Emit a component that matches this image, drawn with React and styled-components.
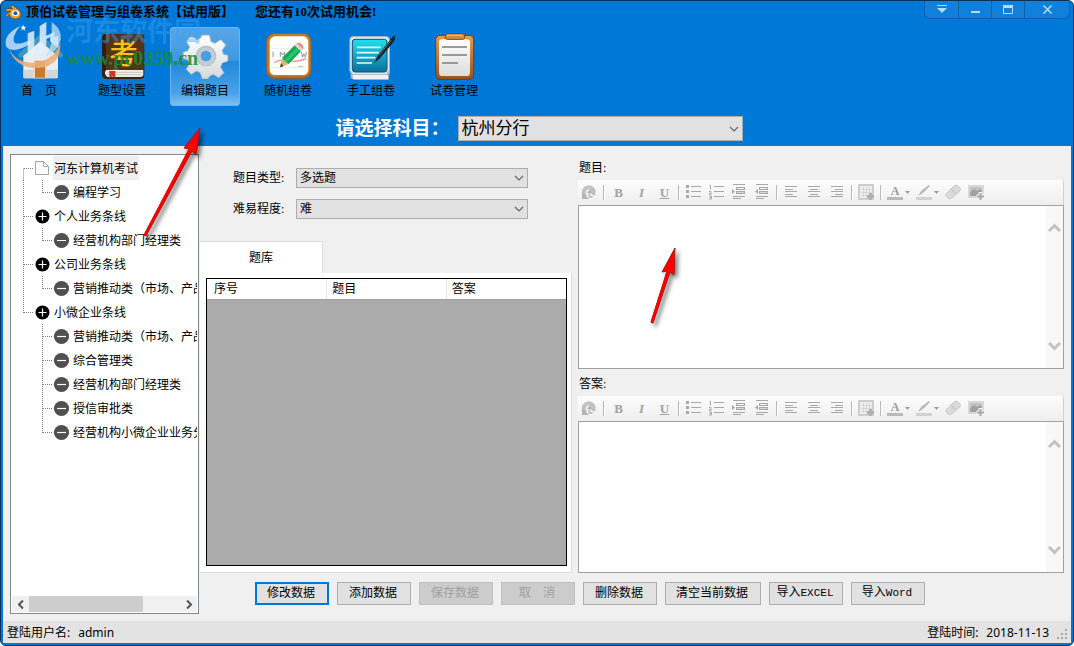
import React from "react";
import styled, { createGlobalStyle, css } from "styled-components";

const GlobalStyle = createGlobalStyle`
  * { box-sizing: border-box; }
  html, body { margin: 0; padding: 0; background: #fff; }
  body {
    font-family: "Liberation Serif", "Noto Sans CJK SC", sans-serif;
    font-size: 12px;
    color: #000;
  }
  button, select, textarea { font: inherit; color: inherit; margin: 0; }
  button { padding: 0; }
  svg { display: block; flex: none; }
`;

/* ---------- window frame ---------- */

const Window = styled.div`
  position: relative;
  display: flex;
  flex-direction: column;
  min-height: 100vh;
  padding: 0 2px 2px;
  border: 1px solid #06325c;
  border-radius: 6px;
  background: #0078d7;
  overflow: hidden;
`;

const TitleBar = styled.header`
  display: flex;
  align-items: flex-start;
  height: 26px;
`;

const AppTitle = styled.h1`
  display: flex;
  align-items: center;
  gap: 4px;
  flex: 1;
  margin: 0;
  padding-left: 2px;
  font-size: 13px;
  font-weight: 700;
  line-height: 22px;
  white-space: nowrap;
`;

const TrialNote = styled.span`
  padding-left: 17px;
`;

const WindowControls = styled.div`
  display: flex;
  margin-right: 1px;
  border: 1px solid #0861ae;
  border-top: 0;
  border-radius: 0 0 6px 6px;
  background: #1180da;
  overflow: hidden;
`;

const ControlButton = styled.button`
  display: flex;
  align-items: center;
  justify-content: center;
  width: ${(p) => (p.$wide ? 45 : 33)}px;
  height: 17px;
  border: 0;
  border-left: ${(p) => (p.$first ? "0" : "1px solid #0861ae")};
  background: transparent;
`;

const Toolbar = styled.nav`
  display: flex;
  gap: 13px;
  padding-left: 1px;
`;

const ToolbarButton = styled.button`
  display: flex;
  flex-direction: column;
  align-items: center;
  width: 70px;
  height: 79px;
  padding: 5px 0 0;
  border: 1px solid transparent;
  border-radius: 3px;
  background: transparent;
  line-height: 20px;
  white-space: pre;
  ${(p) =>
    p.$active &&
    css`
      border-color: #6db4ec;
      background: linear-gradient(#5aa6e4 0%, #3d98e2 42%, #2088da 43%, #4aa3e8 85%, #7cc0f2 100%);
    `}
`;

const SubjectRow = styled.div`
  display: flex;
  justify-content: center;
  align-items: center;
  gap: 8px;
  padding: 10px 0 5px 4px;
`;

const SubjectLabel = styled.label`
  color: #fff;
  font-size: 19px;
  font-weight: 700;
  line-height: 25px;
`;

/* ---------- drop-down ---------- */

const SelectFrame = styled.span`
  display: grid;
  align-items: center;
  width: ${(p) => p.$width}px;
`;

const NativeSelect = styled.select`
  grid-area: 1 / 1;
  width: 100%;
  height: ${(p) => (p.$large ? 25 : 20)}px;
  padding: 0 24px 0 3px;
  border: 1px solid #adadad;
  border-radius: 0;
  background: #e1e1e1;
  appearance: none;
  font-size: ${(p) => (p.$large ? 17 : 12)}px;
`;

const SelectArrow = styled.svg`
  grid-area: 1 / 1;
  justify-self: end;
  margin-right: 4px;
  pointer-events: none;
`;

function Select({ id, width, large, options }) {
  return (
    <SelectFrame $width={width}>
      <NativeSelect id={id} $large={large} defaultValue={options[0]}>
        {options.map((o) => (
          <option key={o}>{o}</option>
        ))}
      </NativeSelect>
      <SelectArrow width="10" height="6" viewBox="0 0 10 6">
        <path d="M1 1l4 4 4-4" fill="none" stroke="#666" strokeWidth="1.2" />
      </SelectArrow>
    </SelectFrame>
  );
}

/* ---------- body ---------- */

const Body = styled.main`
  display: flex;
  gap: 1px;
  flex: 1;
  padding: 8px 7px 7px;
  background: #f0f0f0;
`;

const TreePanel = styled.aside`
  display: flex;
  flex-direction: column;
  flex: none;
  width: 189px;
  padding: 1px;
  border: 1px solid #828790;
  background: #fff;
`;

const TreeList = styled.ul`
  flex: 1;
  margin: 0;
  padding: 0 0 0 2px;
  list-style: none;
  overflow: hidden;
`;

const TreeRow = styled.li`
  display: flex;
  align-items: center;
  height: 24px;
  white-space: nowrap;
`;

const TreeText = styled.span`
  margin-left: 1px;
  padding: 2px 1px 0;
  line-height: 22px;
  background: ${(p) => (p.$selected ? "#efefef" : "transparent")};
`;

const ScrollTrack = styled.div`
  display: flex;
  align-items: center;
  justify-content: space-between;
  height: 16px;
  background: #f0f0f0;
`;

const ScrollThumb = styled.div`
  flex: none;
  width: 114px;
  height: 16px;
  background: #cdcdcd;
`;

const ScrollArrow = styled.button`
  display: flex;
  align-items: center;
  justify-content: center;
  width: 17px;
  height: 16px;
  border: 0;
  background: transparent;
`;

const ScrollSpace = styled.div`
  flex: 1;
`;

const Main = styled.div`
  display: flex;
  flex-direction: column;
  gap: 9px;
  flex: 1;
  min-width: 0;
  padding-bottom: 9px;
`;

const Columns = styled.div`
  display: flex;
  gap: 6px;
  flex: 1;
`;

const QuestionColumn = styled.section`
  display: flex;
  flex-direction: column;
  flex: none;
  width: 372px;
`;

const Filters = styled.div`
  display: flex;
  flex-direction: column;
  gap: 11px;
  padding: 14px 0 22px 33px;
`;

const FilterRow = styled.div`
  display: flex;
  align-items: center;
`;

const FilterLabel = styled.label`
  width: 63px;
  line-height: 20px;
`;

const Tab = styled.button`
  width: 123px;
  height: 32px;
  padding-bottom: 2px;
  border: 1px solid #dcdcdc;
  border-width: 1px 1px 0 0;
  background: #fff;
`;

const TabPanel = styled.div`
  display: flex;
  flex: 1;
  padding: 5px 4px 6px 6px;
  border: 1px solid #dcdcdc;
  border-width: 0 1px 1px 0;
  background: #fff;
`;

const GridFrame = styled.div`
  flex: 1;
  border: 1px solid #000;
  background: #ababab;
`;

const QuestionTable = styled.table`
  width: 100%;
  border-collapse: collapse;
  table-layout: fixed;
  background: #fff;
`;

const HeadCell = styled.th`
  height: 20px;
  padding: 1px 0 0 5px;
  border-right: 1px solid #e5e5e5;
  border-bottom: 1px solid #a0a0a0;
  font-weight: 400;
  line-height: 18px;
  text-align: left;
  &:first-child { padding-left: 7px; }
  &:last-child { border-right: 0; }
`;

const EditorColumn = styled.section`
  display: flex;
  flex-direction: column;
  gap: 1px;
  flex: 1;
  min-width: 0;
`;

const EditorField = styled.div`
  display: flex;
  flex-direction: column;
  flex: 1 1 ${(p) => p.$basis}px;
`;

const EditorLabel = styled.label`
  padding: 2px 0 0 1px;
  line-height: 24px;
`;

const FormatBar = styled.div`
  display: flex;
  align-items: center;
  height: 25px;
  border-right: 1px solid #d0d0d0;
  border-radius: 2px 2px 0 0;
  background: linear-gradient(#fdfdfd, #eeeeee);
`;

const FormatButton = styled.button`
  display: flex;
  align-items: center;
  justify-content: center;
  width: ${(p) => (p.$menu ? 29 : 23)}px;
  height: 25px;
  border: 0;
  background: transparent;
  color: #a2a2a2;
  font-family: "Liberation Serif", serif;
  font-size: 13px;
  font-weight: 700;
  font-style: ${(p) => (p.$italic ? "italic" : "normal")};
  text-decoration: ${(p) => (p.$underline ? "underline" : "none")};
`;

const Divider = styled.span`
  width: 2px;
  height: 15px;
  margin: 0 2px;
  border-left: 1px solid #b8b8b8;
  border-right: 1px solid #fff;
`;

const EditorBox = styled.div`
  display: flex;
  flex: 1;
  border: 1px solid #a0a0a0;
  background: #fff;
`;

const EditorText = styled.textarea`
  flex: 1;
  min-width: 0;
  padding: 4px;
  border: 0;
  outline: 0;
  background: #fff;
  resize: none;
`;

const EditorScroll = styled.div`
  display: flex;
  flex-direction: column;
  align-items: center;
  justify-content: space-between;
  width: 17px;
  padding: 17px 0;
  background: #f8f8f8;
`;

const Actions = styled.div`
  display: flex;
  gap: 8px;
  padding-left: 55px;
`;

const ActionButton = styled.button`
  width: ${(p) => (p.$wide ? 96 : 74)}px;
  height: 23px;
  padding: 0 2px 2px 0;
  border: ${(p) => (p.$focused ? "2px solid #0078d7" : "1px solid #adadad")};
  background: #e1e1e1;
  line-height: 18px;
  white-space: pre;
  &:disabled {
    border-color: #bfbfbf;
    background: #cccccc;
    color: #a0a0a0;
  }
`;

const Latin = styled.span`
  font-family: "Liberation Mono", monospace;
  font-size: 11px;
`;

const StatusBar = styled.footer`
  display: flex;
  justify-content: space-between;
  height: 22px;
  padding: 1px 2px 0 4px;
  background: #e3e3e3;
  font-family: "Noto Sans", "Noto Sans CJK SC", sans-serif;
  line-height: 22px;
`;

const StatusItem = styled.span`
  display: flex;
  gap: 8px;
`;

const Grip = styled.svg`
  align-self: flex-end;
`;

/* ---------- overlays ---------- */

const Watermark = styled.div`
  position: absolute;
  top: 17px;
  left: 4px;
  display: flex;
  gap: 1px;
  pointer-events: none;
`;

const WatermarkText = styled.div`
  display: flex;
  flex-direction: column;
  color: rgba(60, 160, 240, 0.45);
  font-size: 27px;
  font-weight: 700;
  line-height: 28px;
  white-space: nowrap;
`;

const WatermarkSite = styled.span`
  color: rgba(28, 140, 50, 0.85);
  font-size: 20px;
  line-height: 24px;
`;

const Pointer = styled.svg`
  position: absolute;
  left: ${(p) => p.$x}px;
  top: ${(p) => p.$y}px;
  overflow: visible;
  filter: drop-shadow(3px 3px 2px rgba(0, 0, 0, 0.5));
  pointer-events: none;
`;

/* ---------- icons ---------- */

const AppLogo = () => (
  <svg width="17" height="16" viewBox="0 0 51 48">
    <path d="M3 14h20l-6-6 5-5 22 17c9 10 2 24-12 25-12 0-19-7-19-14L5 39l-4-5 16-12H3z" fill="#f39a1c" stroke="#5d4424" strokeWidth="2" />
    <ellipse cx="31" cy="28" rx="11" ry="9" fill="#fff" />
    <circle cx="31" cy="28" r="6" fill="#1c62a8" />
  </svg>
);

const HomeIcon = () => (
  <svg width="48" height="48" viewBox="0 0 144 144">
    <path d="M25 62h104v70q0 4-4 4H29q-4 0-4-4z" fill="#e9eef2" />
    <path d="M25 110h104v22q0 4-4 4H29q-4 0-4-4z" fill="#d3d6da" />
    <path d="M56 82h38v54H56z" fill="#f0d9c0" />
    <path d="M60 84h30v50H60z" fill="#c77a33" />
    <path d="M60 84h30v18H60z" fill="#dc9a5c" />
    <path d="M106 10h24v36l-24-20z" fill="#e8f1f7" />
    <path d="M76 2l68 62q1 10-9 11L76 24 18 75q-11-2-8-12z" fill="#3f97bd" />
    <path d="M76 24l53 46v6H25v-6z" fill="#e6edf2" />
  </svg>
);

const BookIcon = () => (
  <svg width="48" height="48" viewBox="0 0 144 144">
    <path d="M22 3h106q11 0 11 11v112q0 12-12 12H26q-14 0-14-16V14Q12 3 22 3z" fill="#3b2412" />
    <path d="M24 111h112v16q-2 5-9 5H28q-12-10-4-21z" fill="#f0ede6" />
    <path d="M28 118h106M28 125h104" stroke="#b9b4aa" strokeWidth="2" />
    <path d="M22 4h104q11 0 11 10v97H26q-8 0-12 8V14Q14 4 22 4z" fill="#553317" />
    <path d="M14 14q0-10 9-10v107q-6 1-9 7z" fill="#301a0b" />
    <path d="M34 114h18v22l-9-6-9 6z" fill="#d2302a" />
    <text x="77" y="93" textAnchor="middle" fontSize="86" fontWeight="500" fill="#f9c21b" fontFamily="Noto Sans CJK SC">考</text>
  </svg>
);

const GearIcon = () => (
  <svg width="48" height="48" viewBox="0 0 144 144">
    <defs>
      <linearGradient id="gear" x1="0" y1="0" x2="0" y2="1">
        <stop offset="0" stopColor="#ffffff" />
        <stop offset="1" stopColor="#d6dade" />
      </linearGradient>
    </defs>
    <path
      d="M63 4h24l5 21 13 6 19-12 16 17-12 18 5 13 14 3v18l-18 6-6 14 11 18-16 16-18-11-13 6-4 8H64l-6-19-12-6-18 11-16-16 11-18-6-13-15-6V60l15-5 6-13-11-19 16-16 19 12 12-6z"
      fill="url(#gear)"
      stroke="#c3c8cc"
      strokeWidth="3"
      strokeLinejoin="round"
      transform="translate(5 3) scale(.92)"
    />
    <circle cx="75" cy="69" r="31" fill="#b4bcc4" />
    <circle cx="75" cy="71" r="28" fill="#c4ccd3" />
    <circle cx="75" cy="69" r="16" fill="#489ee2" />
  </svg>
);

const RandomIcon = () => (
  <svg width="48" height="48" viewBox="0 0 144 144">
    <rect x="7" y="1" width="135" height="136" rx="24" fill="#a9601f" />
    <rect x="10" y="3" width="129" height="128" rx="22" fill="#cb7822" />
    <rect x="17" y="10" width="116" height="116" rx="16" fill="#fdfdfb" />
    <path d="M22 46h106M22 82h106M22 104h106" stroke="#e2e2e2" strokeWidth="2" />
    <path d="M27 56v16M49 72V57l7 9 6-9v15M112 57l4 15 4-10 4 10 4-15" fill="none" stroke="#999" strokeWidth="3" />
    <path d="M30 90q20-14 42-7t54-7" fill="none" stroke="#f29a9a" strokeWidth="4" />
    <path d="M48 103l6-27 18 18z" fill="#e9b072" />
    <path d="M48 103l3-12 8 9z" fill="#444" />
    <path d="M54 75l38-38 19 18-38 39z" fill="#17a653" />
    <path d="M60 82l38-38 8 7-38 38z" fill="#27c56b" />
    <path d="M92 37l7-7 19 19-7 6z" fill="#d8d8d8" />
    <path d="M98 31q7-5 14 2 9 8 5 16z" fill="#ee8686" />
    <path d="M102 100h16" stroke="#bbb" strokeWidth="3" />
  </svg>
);

const ManualIcon = () => (
  <svg width="48" height="48" viewBox="0 0 144 144">
    <defs>
      <linearGradient id="screen" x1="0" y1="0" x2="0" y2="1">
        <stop offset="0" stopColor="#1fe0ee" />
        <stop offset="1" stopColor="#0a6f9e" />
      </linearGradient>
    </defs>
    <path d="M20 9h96q13 0 13 14v98q0 4-3 4v12q0 4-4 4H22q-4 0-4-4h-7v-16q-4-3-4-8V22Q7 9 20 9z" fill="#9fb3c6" />
    <path d="M21 12h94q11 0 11 11v89l-8 12H18l-8-12V23q0-11 11-11z" fill="#dfe7ef" />
    <path d="M17 126h106v12H17z" fill="#eef1f4" />
    <rect x="16" y="19" width="104" height="98" rx="8" fill="url(#screen)" stroke="#17506e" strokeWidth="3" />
    <path d="M29 43h72M29 59h66M29 74h56M29 90h46" stroke="#e5fcff" strokeWidth="5" />
    <path d="M82 90l10-22 44-56q8-7 11-2-1 8-10 20l-38 46z" fill="#16242c" />
    <path d="M97 66l36-45" stroke="#5d7782" strokeWidth="3" />
  </svg>
);

const ClipboardIcon = () => (
  <svg width="48" height="48" viewBox="0 0 144 144">
    <defs>
      <linearGradient id="board" x1="0" y1="0" x2="0" y2="1">
        <stop offset="0" stopColor="#e6a04a" />
        <stop offset="1" stopColor="#9c5219" />
      </linearGradient>
      <linearGradient id="sheet" x1="0" y1="0" x2="0" y2="1">
        <stop offset="0" stopColor="#ffffff" />
        <stop offset="1" stopColor="#dcdcdc" />
      </linearGradient>
    </defs>
    <rect x="17" y="7" width="114" height="132" rx="13" fill="url(#board)" stroke="#703a10" strokeWidth="3" />
    <rect x="27" y="19" width="93" height="110" rx="10" fill="url(#sheet)" />
    <path d="M36 42h75M36 66h75M36 90h48" stroke="#9a9a9a" strokeWidth="6" />
    <rect x="46" y="2" width="58" height="17" rx="6" fill="#d08c48" stroke="#7c451a" strokeWidth="3" />
    <path d="M52 7h46" stroke="#f0c08a" strokeWidth="3" />
  </svg>
);

const WatermarkLogo = () => (
  <svg width="60" height="54" viewBox="0 0 180 162">
    <path d="M8 84q20 50 74 50 66-3 84-62 4 72-66 78-70 4-92-66z" fill="#eeaa72" opacity=".85" />
    <path d="M46 24Q-8 50 4 86q22 24 76-11l-4-9Q30 86 26 69q-2-20 20-45z" fill="#cfe6fa" opacity=".8" />
    <path d="M68 46l20-8v68q0 16-28 18 8-8 8-20z" fill="#e2f1fd" opacity=".85" />
    <path d="M104 24l20-12v66q-6 26-32 34 12-14 12-32z" fill="#e2f1fd" opacity=".85" />
    <path d="M140 12q32 22 27 54-8 34-48 51 21-29 21-52z" fill="#bfe0f8" opacity=".75" />
    <path d="M122 54l26-12v10l-26 12z" fill="#e2f1fd" opacity=".85" />
    <path d="M55 20l3 6 6 1-5 4 2 7-6-4-6 4 2-7-5-4 6-1z" fill="#e8f4ff" />
  </svg>
);

const Guide = ({ kind }) => {
  const d = {
    first: "M9.5 12.5V24M10 12.5H19",
    tee: "M9.5 0V24M10 12.5H19",
    elbow: "M9.5 0V13M10 12.5H19",
    line: "M9.5 0V24",
    none: "",
  }[kind];
  return (
    <svg width="19" height="24">
      <path d={d} stroke="#808080" strokeDasharray="1 1" fill="none" />
    </svg>
  );
};

const NodeIcon = ({ kind }) => (
  <svg width="19" height="24" viewBox="0 0 19 24">
    {kind === "page" && (
      <path d="M2.5 5.5h8l5 5v8h-13zM10.5 5.5v5h5" fill="#fafafa" stroke="#a5a5a5" />
    )}
    {kind === "plus" && (
      <>
        <circle cx="9.5" cy="12.5" r="7" fill="#000" />
        <path d="M5.5 12.5h8M9.5 8.5v8" stroke="#fff" strokeWidth="1.2" />
      </>
    )}
    {kind === "minus" && (
      <>
        <circle cx="9.5" cy="12.5" r="7.6" fill="#505050" />
        <path d="M5 12.5h9" stroke="#fff" strokeWidth="1.2" />
      </>
    )}
  </svg>
);

const FormatIcon = ({ children, width = 23 }) => (
  <svg width={width} height="25" fill="none" stroke="#a8a8a8">
    {children}
  </svg>
);

const Chevron = ({ d, w, h, color = "#c2c2c2", weight = 3 }) => (
  <svg width={w} height={h}>
    <path d={d} fill="none" stroke={color} strokeWidth={weight} />
  </svg>
);

/* ---------- data ---------- */

const TOOLS = [
  { label: "首　页", Icon: HomeIcon },
  { label: "题型设置", Icon: BookIcon },
  { label: "编辑题目", Icon: GearIcon, active: true },
  { label: "随机组卷", Icon: RandomIcon },
  { label: "手工组卷", Icon: ManualIcon },
  { label: "试卷管理", Icon: ClipboardIcon },
];

const TREE = [
  { text: "河东计算机考试", guides: ["first"], icon: "page", selected: true },
  { text: "编程学习", guides: ["line", "elbow"], icon: "minus" },
  { text: "个人业务条线", guides: ["tee"], icon: "plus" },
  { text: "经营机构部门经理类", guides: ["line", "elbow"], icon: "minus" },
  { text: "公司业务条线", guides: ["tee"], icon: "plus" },
  { text: "营销推动类（市场、产品", guides: ["line", "elbow"], icon: "minus" },
  { text: "小微企业条线", guides: ["elbow"], icon: "plus" },
  { text: "营销推动类（市场、产品", guides: ["none", "tee"], icon: "minus" },
  { text: "综合管理类", guides: ["none", "tee"], icon: "minus" },
  { text: "经营机构部门经理类", guides: ["none", "tee"], icon: "minus" },
  { text: "授信审批类", guides: ["none", "tee"], icon: "minus" },
  { text: "经营机构小微企业业务分", guides: ["none", "elbow"], icon: "minus" },
];

function FormatTools() {
  return (
    <FormatBar>
      <FormatButton aria-label="撤销">
        <FormatIcon>
          <path d="M8 16.5A5 5 0 1 1 15 15" stroke="#c2c2c2" strokeWidth="4" />
          <path d="M4 19v-7l7 7z" fill="#b4b4b4" stroke="none" />
          <path d="M9 13l3-4 3 4z" fill="#b4b4b4" stroke="none" />
          <path d="M11.500 13v4h3" stroke="#c2c2c2" strokeWidth="2" />
        </FormatIcon>
      </FormatButton>
      <Divider />
      <FormatButton>B</FormatButton>
      <FormatButton $italic>I</FormatButton>
      <FormatButton $underline>U</FormatButton>
      <Divider />
      <FormatButton aria-label="项目符号">
        <FormatIcon>
          <path d="M9 6.500h10M9 11.500h10M9 16.500h10" />
          <path d="M4 6.500h3M4 11.500h3M4 16.500h3" strokeWidth="3" />
        </FormatIcon>
      </FormatButton>
      <FormatButton aria-label="编号">
        <FormatIcon>
          <path d="M9 6.500h10M9 11.500h10M9 16.500h10" />
          <path d="M4.500 5.500h1v4M4 11.500h2v1l-2 1.500h3M4 16h2.500v1.500H5h1.500V19H4" />
        </FormatIcon>
      </FormatButton>
      <FormatButton aria-label="增加缩进">
        <FormatIcon>
          <path d="M5 4.500h12M5 16.500h12M5 18.500h8" />
          <rect x="8.500" y="7.500" width="8" height="2" />
          <rect x="8.500" y="11.500" width="8" height="2" fill="#d8d8d8" />
          <path d="M4 9v5l3-2.500z" fill="#a8a8a8" stroke="none" />
        </FormatIcon>
      </FormatButton>
      <FormatButton aria-label="减少缩进">
        <FormatIcon>
          <path d="M5 4.500h12M5 16.500h12M5 18.500h8" />
          <rect x="8.500" y="7.500" width="8" height="2" />
          <rect x="8.500" y="11.500" width="8" height="2" fill="#d8d8d8" />
          <path d="M7 9v5l-3-2.500z" fill="#a8a8a8" stroke="none" />
        </FormatIcon>
      </FormatButton>
      <Divider />
      <FormatButton aria-label="左对齐">
        <FormatIcon>
          <path d="M5 6.500h12M5 9.500h8M5 11.500h12M5 14.500h8M5 16.500h12" />
        </FormatIcon>
      </FormatButton>
      <FormatButton aria-label="居中">
        <FormatIcon>
          <path d="M5 6.500h12M7 9.500h8M5 11.500h12M7 14.500h8M5 16.500h12" />
        </FormatIcon>
      </FormatButton>
      <FormatButton aria-label="右对齐">
        <FormatIcon>
          <path d="M5 6.500h12M9 9.500h8M5 11.500h12M9 14.500h8M5 16.500h12" />
        </FormatIcon>
      </FormatButton>
      <Divider />
      <FormatButton aria-label="表格">
        <FormatIcon>
          <rect x="4" y="5" width="14" height="14" stroke="#cdcdcd" strokeWidth="2" fill="#eeeeee" />
          <path d="M6 9.500h11M6 12.500h11M6 15.500h8M8.500 7v10M11.500 7v10M14.500 7v8" stroke="#d6d6d6" />
          <path d="M15.500 13v7M12 16.500h7" strokeWidth="3" stroke="#b0b0b0" />
        </FormatIcon>
      </FormatButton>
      <Divider />
      <FormatButton $menu aria-label="字体颜色">
        <FormatIcon width={29}>
          <text x="11" y="15" textAnchor="middle" fontSize="12" fill="#9c9c9c" stroke="none">A</text>
          <path d="M3 18.500h16" stroke="#bababa" strokeWidth="3" />
          <path d="M21 11h5l-2.500 3z" fill="#9c9c9c" stroke="none" />
        </FormatIcon>
      </FormatButton>
      <FormatButton $menu aria-label="突出显示">
        <FormatIcon width={29}>
          <path d="M3 18.500h16" stroke="#d2d2d2" strokeWidth="3" />
          <path d="M5 16l3-5 8-6 1 1-7 7z" fill="#b8b8b8" stroke="none" />
          <path d="M21 11h5l-2.500 3z" fill="#9c9c9c" stroke="none" />
        </FormatIcon>
      </FormatButton>
      <FormatButton aria-label="清除">
        <FormatIcon>
          <path d="M4 14l8-8q2-2 4 0l2 2q1 2 0 3l-8 7q-2 1-4 0l-2-2q-1-1 0-2z" fill="#dadada" stroke="#cccccc" />
          <path d="M9 9l5 5" stroke="#bdbdbd" />
        </FormatIcon>
      </FormatButton>
      <FormatButton aria-label="图片">
        <FormatIcon>
          <rect x="4" y="6" width="14" height="11" stroke="#d8d8d8" strokeWidth="2" fill="#c4c4c4" />
          <path d="M5 12l4-3 3 2 3-2 2 2v5H5z" fill="#a0a0a0" stroke="none" />
          <path d="M15.500 12v8M11.500 16.500h8" strokeWidth="4" stroke="#f4f4f4" />
          <path d="M15.500 13v7M12 16.500h7" strokeWidth="2" />
        </FormatIcon>
      </FormatButton>
    </FormatBar>
  );
}

function Editor({ id, label, basis }) {
  return (
    <EditorField $basis={basis}>
      <EditorLabel htmlFor={id}>{label}</EditorLabel>
      <FormatTools />
      <EditorBox>
        <EditorText id={id} />
        <EditorScroll>
          <Chevron w={13} h={9} d="M1 8l5.500-5.500L12 8" />
          <Chevron w={13} h={9} d="M1 1l5.500 5.500L12 1" />
        </EditorScroll>
      </EditorBox>
    </EditorField>
  );
}

export default function App() {
  return (
    <Window>
      <GlobalStyle />
      <TitleBar>
        <AppTitle>
          <AppLogo />
          顶伯试卷管理与组卷系统【试用版】
          <TrialNote>您还有10次试用机会!</TrialNote>
        </AppTitle>
        <WindowControls>
          <ControlButton $first aria-label="菜单">
            <svg width="10" height="9"><path d="M0 .5h10" stroke="#b9dcf8" /><path d="M0 3h10L5 8z" fill="#b9dcf8" /></svg>
          </ControlButton>
          <ControlButton aria-label="最小化">
            <svg width="9" height="9"><path d="M0 7h9" stroke="#b9dcf8" strokeWidth="2" /></svg>
          </ControlButton>
          <ControlButton aria-label="最大化">
            <svg width="10" height="9"><path d="M.5 1v7.500h9V1" fill="none" stroke="#b9dcf8" /><path d="M0 1.500h10" stroke="#b9dcf8" strokeWidth="3" /></svg>
          </ControlButton>
          <ControlButton $wide aria-label="关闭">
            <svg width="9" height="9"><path d="M.5.5l8 8M8.500.5l-8 8" stroke="#b9dcf8" strokeWidth="1.500" /></svg>
          </ControlButton>
        </WindowControls>
      </TitleBar>

      <Toolbar>
        {TOOLS.map(({ label, Icon, active }) => (
          <ToolbarButton key={label} $active={active}>
            <Icon />
            {label}
          </ToolbarButton>
        ))}
      </Toolbar>

      <SubjectRow>
        <SubjectLabel htmlFor="subject">请选择科目：</SubjectLabel>
        <Select id="subject" width={285} large options={["杭州分行"]} />
      </SubjectRow>

      <Body>
        <TreePanel>
          <TreeList>
            {TREE.map((node, i) => (
              <TreeRow key={i}>
                {node.guides.map((g, n) => (
                  <Guide key={n} kind={g} />
                ))}
                <NodeIcon kind={node.icon} />
                <TreeText $selected={node.selected}>{node.text}</TreeText>
              </TreeRow>
            ))}
          </TreeList>
          <ScrollTrack>
            <ScrollArrow aria-label="向左滚动">
              <Chevron w={6} h={9} d="M5 .5l-4 4 4 4" color="#555" weight={2} />
            </ScrollArrow>
            <ScrollThumb />
            <ScrollSpace />
            <ScrollArrow aria-label="向右滚动">
              <Chevron w={6} h={9} d="M1 .5l4 4-4 4" color="#555" weight={2} />
            </ScrollArrow>
          </ScrollTrack>
        </TreePanel>

        <Main>
          <Columns>
            <QuestionColumn>
              <Filters>
                <FilterRow>
                  <FilterLabel htmlFor="kind">题目类型:</FilterLabel>
                  <Select id="kind" width={232} options={["多选题"]} />
                </FilterRow>
                <FilterRow>
                  <FilterLabel htmlFor="level">难易程度:</FilterLabel>
                  <Select id="level" width={232} options={["难"]} />
                </FilterRow>
              </Filters>
              <Tab>题库</Tab>
              <TabPanel>
                <GridFrame>
                  <QuestionTable>
                    <thead>
                      <tr>
                        <HeadCell>序号</HeadCell>
                        <HeadCell>题目</HeadCell>
                        <HeadCell>答案</HeadCell>
                      </tr>
                    </thead>
                  </QuestionTable>
                </GridFrame>
              </TabPanel>
            </QuestionColumn>

            <EditorColumn>
              <Editor id="question" label="题目:" basis={215} />
              <Editor id="answer" label="答案:" basis={203} />
            </EditorColumn>
          </Columns>

          <Actions>
            <ActionButton $focused>修改数据</ActionButton>
            <ActionButton>添加数据</ActionButton>
            <ActionButton disabled>保存数据</ActionButton>
            <ActionButton disabled>取　消</ActionButton>
            <ActionButton>删除数据</ActionButton>
            <ActionButton $wide>清空当前数据</ActionButton>
            <ActionButton>导入<Latin>EXCEL</Latin></ActionButton>
            <ActionButton>导入<Latin>Word</Latin></ActionButton>
          </Actions>
        </Main>
      </Body>

      <StatusBar>
        <StatusItem>
          <span>登陆用户名:</span>
          <span>admin</span>
        </StatusItem>
        <StatusItem>
          <span>登陆时间:</span>
          <span>2018-11-13</span>
          <Grip width="12" height="14" fill="#a8a8a8">
            <path d="M8 0h2v2H8zM4 4h2v2H4zM8 4h2v2H8zM0 8h2v2H0zM4 8h2v2H4zM8 8h2v2H8z" />
          </Grip>
        </StatusItem>
      </StatusBar>

      <Watermark>
        <WatermarkLogo />
        <WatermarkText>
          河东软件园
          <WatermarkSite>www.pc0359.cn</WatermarkSite>
        </WatermarkText>
      </Watermark>

      <Pointer $x={140} $y={124} width="64" height="116">
        <path d="M59 3L43 23l5 1L3 110l2 1L51 26l4 4z" fill="#ff0000" stroke="#a01818" strokeWidth="1" strokeLinejoin="round" />
        <path d="M4 110L50 23" stroke="#ff0000" strokeWidth="2.500" strokeLinecap="round" />
      </Pointer>
      <Pointer $x={646} $y={244} width="34" height="84">
        <path d="M28 3L15 27l5-1L4 77l2 1L23 27l4 3z" fill="#ff0000" stroke="#a01818" strokeWidth="1" strokeLinejoin="round" />
        <path d="M5 77L22 24" stroke="#ff0000" strokeWidth="2.500" strokeLinecap="round" />
      </Pointer>
    </Window>
  );
}
